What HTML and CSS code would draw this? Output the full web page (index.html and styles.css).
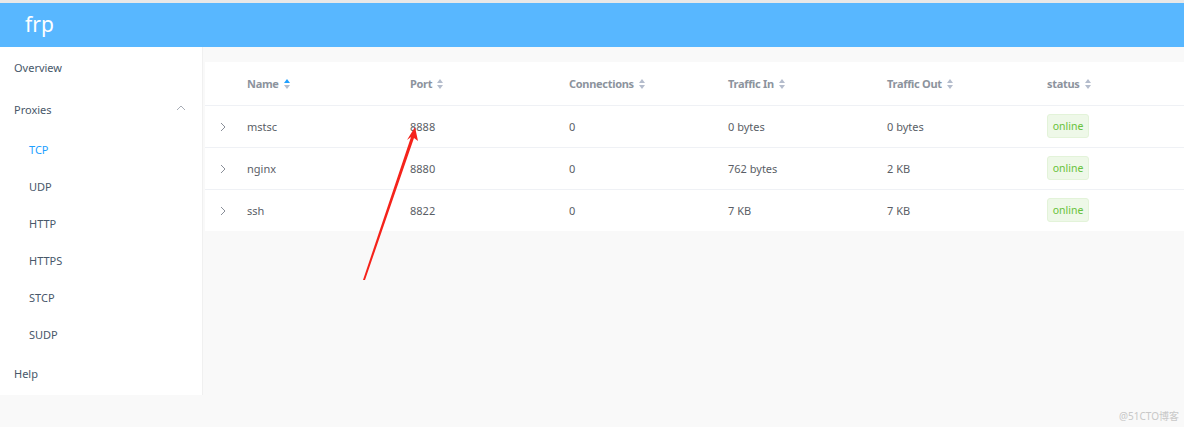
FILE: index.html
```html
<!DOCTYPE html>
<html lang="en">
<head>
<meta charset="UTF-8">
<meta name="viewport" content="width=device-width, initial-scale=1.0">
<title>frp</title>
<link rel="stylesheet" href="styles.css">
</head>
<body>

<div class="topline"></div>
<header class="header">frp</header>

<div class="layout">
    <aside class="sidebar">
        <div class="menu-item">Overview</div>
        <div class="menu-item menu-open">
            <span>Proxies</span>
            <svg class="chevron" width="10" height="6" viewBox="0 0 10 6"><path d="M1 5 L5 1 L9 5" fill="none" stroke="#a8adb6" stroke-width="1"/></svg>
        </div>
        <div class="sub-item active">TCP</div>
        <div class="sub-item">UDP</div>
        <div class="sub-item">HTTP</div>
        <div class="sub-item">HTTPS</div>
        <div class="sub-item">STCP</div>
        <div class="sub-item">SUDP</div>
        <div class="menu-item">Help</div>
    </aside>

    <main class="content">
        <div class="table">
            <div class="row head">
                <div class="cell"></div>
                <div class="cell">Name <span class="sort asc"><i class="up"></i><i class="down"></i></span></div>
                <div class="cell">Port <span class="sort"><i class="up"></i><i class="down"></i></span></div>
                <div class="cell">Connections <span class="sort"><i class="up"></i><i class="down"></i></span></div>
                <div class="cell">Traffic In <span class="sort"><i class="up"></i><i class="down"></i></span></div>
                <div class="cell">Traffic Out <span class="sort"><i class="up"></i><i class="down"></i></span></div>
                <div class="cell">status <span class="sort"><i class="up"></i><i class="down"></i></span></div>
            </div>
            <div class="row">
                <div class="cell expand"><svg width="6" height="10" viewBox="0 0 6 10"><path d="M1 1 L5 5 L1 9" fill="none" stroke="#8a8f99" stroke-width="1"/></svg></div>
                <div class="cell">mstsc</div>
                <div class="cell">8888</div>
                <div class="cell">0</div>
                <div class="cell">0 bytes</div>
                <div class="cell">0 bytes</div>
                <div class="cell"><span class="tag">online</span></div>
            </div>
            <div class="row">
                <div class="cell expand"><svg width="6" height="10" viewBox="0 0 6 10"><path d="M1 1 L5 5 L1 9" fill="none" stroke="#8a8f99" stroke-width="1"/></svg></div>
                <div class="cell">nginx</div>
                <div class="cell">8880</div>
                <div class="cell">0</div>
                <div class="cell">762 bytes</div>
                <div class="cell">2 KB</div>
                <div class="cell"><span class="tag">online</span></div>
            </div>
            <div class="row">
                <div class="cell expand"><svg width="6" height="10" viewBox="0 0 6 10"><path d="M1 1 L5 5 L1 9" fill="none" stroke="#8a8f99" stroke-width="1"/></svg></div>
                <div class="cell">ssh</div>
                <div class="cell">8822</div>
                <div class="cell">0</div>
                <div class="cell">7 KB</div>
                <div class="cell">7 KB</div>
                <div class="cell"><span class="tag">online</span></div>
            </div>
        </div>
    </main>
</div>

<!-- annotation arrow drawn over the screenshot -->
<svg class="annotation" width="1184" height="427" viewBox="0 0 1184 427">
    <polygon points="363,280 411,137 407,140 415,127 418,141 414,138 365,280" fill="#f5231b"/>
</svg>

<div class="watermark">@51CTO博客</div>

</body>
</html>
```

FILE: styles.css
```css
body {
    font-family: "Noto Sans", "Open Sans", Arial, "Noto Sans CJK SC", sans-serif;
    background-color: #f9f9f9;
    color: #48576a;
    margin: 0;
    padding: 0;
    height: 427px;
    overflow: hidden;
}
.topline {
    height: 3px;
    background-color: #e8e8e8;
}
.header {
    height: 44px;
    background-color: #58b7ff;
    color: #ffffff;
    font-size: 21px;
    line-height: 42px;
    padding-left: 25px;
}
.layout {
    display: flex;
    align-items: flex-start;
}
.sidebar {
    width: 203px;
    background-color: #ffffff;
    border-right: 1px solid #f0f0f0;
    box-sizing: border-box;
    height: 348px;
}
.menu-item {
    height: 42px;
    line-height: 44px;
    padding-left: 14px;
    padding-right: 16px;
    font-size: 11px;
    color: #48576a;
    display: flex;
    justify-content: space-between;
    align-items: center;
}
.chevron {
    margin-top: -4px;
}
.sub-item {
    height: 37px;
    line-height: 38px;
    padding-left: 29px;
    font-size: 11px;
    color: #48576a;
}
.sub-item.active {
    color: #20a0ff;
}
.content {
    flex: 1;
    padding-top: 15px;
    padding-left: 2px;
}
.table {
    background-color: #ffffff;
}
.row {
    display: grid;
    grid-template-columns: 42px 163px 159px 159px 159px 160px 1fr;
    height: 41px;
    border-bottom: 1px solid #eff1f5;
    align-items: center;
    font-size: 11px;
    color: #5a5e66;
}
.row:last-child {
    border-bottom: none;
}
.row.head {
    height: 43px;
    font-weight: bold;
    color: #8c939d;
    letter-spacing: -0.3px;
}
.cell {
    display: flex;
    align-items: center;
    white-space: nowrap;
}
.expand {
    padding-left: 15px;
}
.sort {
    display: inline-flex;
    flex-direction: column;
    margin-left: 5px;
    gap: 2px;
}
.sort i {
    width: 0;
    height: 0;
    border-left: 3px solid transparent;
    border-right: 3px solid transparent;
}
.sort .up {
    border-bottom: 4px solid #b4bccc;
}
.sort .down {
    border-top: 4px solid #b4bccc;
}
.sort.asc .up {
    border-bottom-color: #20a0ff;
}
.tag {
    display: inline-block;
    width: 42px;
    height: 24px;
    line-height: 22px;
    text-align: center;
    font-size: 10.5px;
    color: #67c23a;
    background-color: #eef8e8;
    border: 1px solid #e3f3d9;
    border-radius: 3px;
    box-sizing: border-box;
    margin-top: -2px;
}
.annotation {
    position: absolute;
    left: 0;
    top: 0;
    pointer-events: none;
}
.watermark {
    position: absolute;
    right: 5px;
    bottom: 4px;
    font-size: 10px;
    color: #c8c8c8;
}
```
